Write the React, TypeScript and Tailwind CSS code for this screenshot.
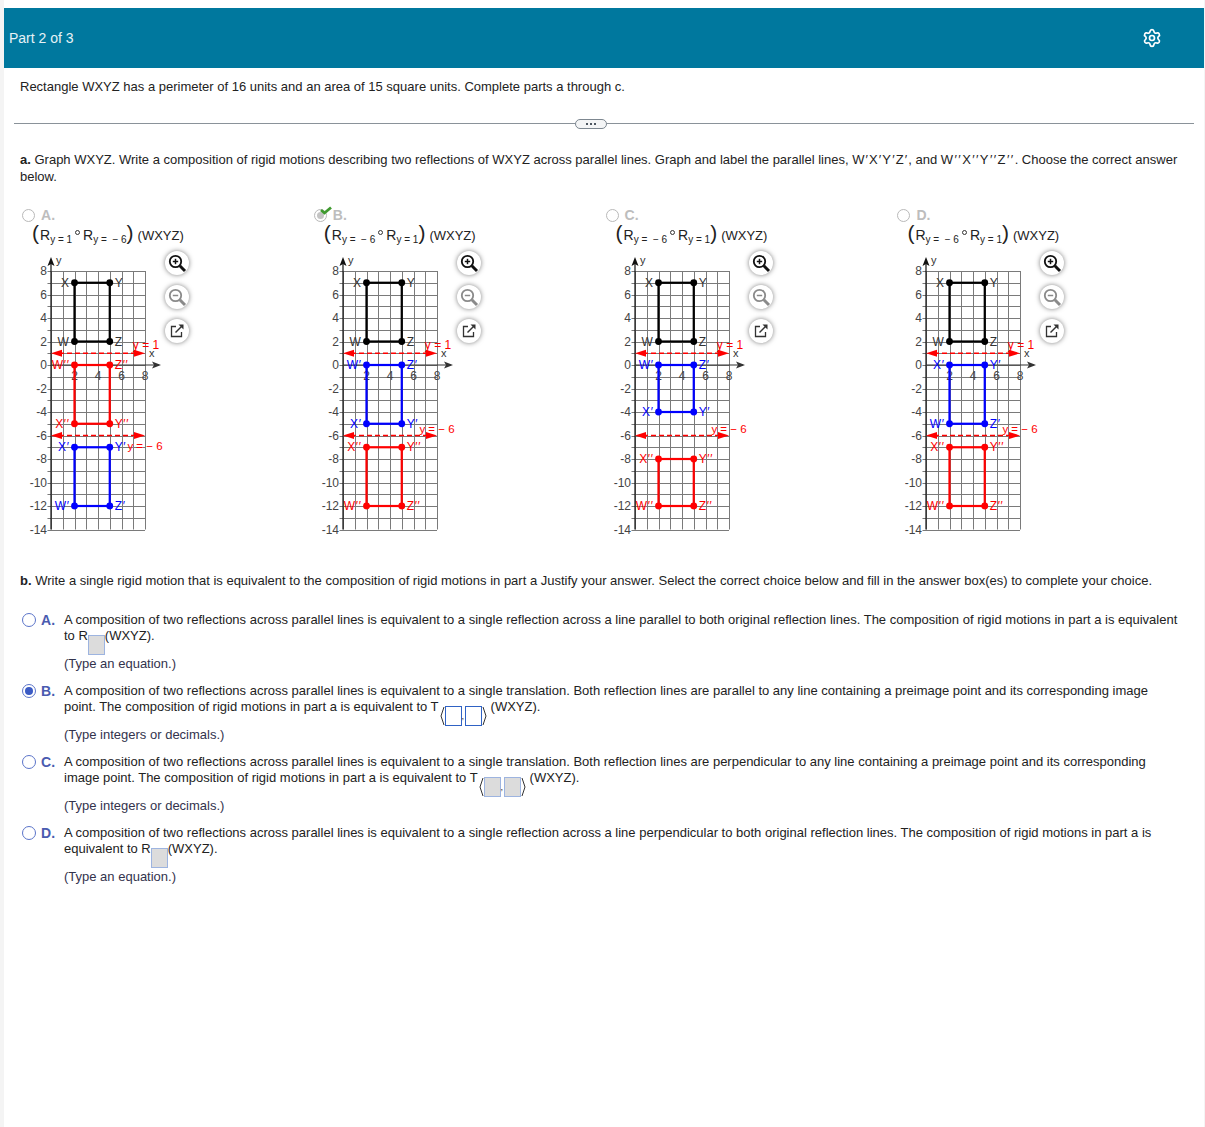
import { Settings } from "lucide-react";

const X0 = 31;
const Y0 = 115;
const UNIT = 11.75;

const px = (u: number) => X0 + u * UNIT;
const py = (u: number) => Y0 - u * UNIT;
const snap = (v: number) => Math.round(v) + 0.5;

type Shape = {
  color: string;
  top: number;
  bottom: number;
  names: [string, string, string, string];
};

type GraphProps = {
  shapes: Shape[];
  lowLabelY: number;
};

function MirrorLine({ y }: { y: number }) {
  const v = py(y);
  return (
    <g>
      <line x1={px(0) + 8} x2={px(8) - 8} y1={v} y2={v} stroke="#ff0000" strokeWidth="1.5" strokeDasharray="5 3" />
      <polygon points={`${px(0)},${v} ${px(0) + 11},${v - 3.5} ${px(0) + 11},${v + 3.5}`} fill="#ff0000" />
      <polygon points={`${px(8)},${v} ${px(8) - 11},${v - 3.5} ${px(8) - 11},${v + 3.5}`} fill="#ff0000" />
    </g>
  );
}

function Rectangle({ shape }: { shape: Shape }) {
  const { color, top, bottom, names } = shape;
  const l = px(2);
  const r = px(5);
  const t = py(top);
  const b = py(bottom);
  const points: [number, number, string, boolean][] = [
    [l, t, names[0], true],
    [r, t, names[1], false],
    [l, b, names[2], true],
    [r, b, names[3], false],
  ];
  return (
    <g>
      <rect x={l} y={t} width={r - l} height={b - t} fill="none" stroke={color} strokeWidth="2.2" />
      {points.map(([x, y, name, left]) => (
        <g key={name}>
          <circle cx={x} cy={y} r="3.4" fill={color} />
          <text
            x={left ? x - 5 : x + 5}
            y={y + 4}
            textAnchor={left ? "end" : "start"}
            fontSize="12"
            letterSpacing="0.6"
            fill={color === "#000000" ? "#333333" : color}
          >
            {name}
          </text>
        </g>
      ))}
    </g>
  );
}

function Graph({ shapes, lowLabelY }: GraphProps) {
  const xs = [0, 1, 2, 3, 4, 5, 6, 7, 8];
  const ys = Array.from({ length: 23 }, (_, i) => 8 - i);
  return (
    <svg width="145" height="290" className="overflow-visible shrink-0" style={{ fontFamily: "'Liberation Sans', Arial, sans-serif" }}>
      {xs.map((u) => (
        <line key={u} x1={snap(px(u))} x2={snap(px(u))} y1={py(8)} y2={py(-14)} stroke="#7a7a7a" />
      ))}
      {ys.map((u) => (
        <line key={u} x1={px(-0.3)} x2={px(8)} y1={snap(py(u))} y2={snap(py(u))} stroke="#7a7a7a" />
      ))}
      {ys.filter((u) => u % 2 === 0).map((u) => (
        <text key={u} x={px(0) - 4} y={py(u) + 4} textAnchor="end" fontSize="12" fill="#444444">
          {u}
        </text>
      ))}
      {[2, 4, 6, 8].map((u) => (
        <text key={u} x={px(u)} y={Y0 + 15} textAnchor="middle" fontSize="12" fill="#444444">
          {u}
        </text>
      ))}
      <line x1={px(0)} x2={px(0)} y1={py(-14)} y2={10} stroke="#111111" strokeWidth="1.2" />
      <polygon points={`${px(0)},7 ${px(0) - 3.5},16 ${px(0)},14 ${px(0) + 3.5},16`} fill="#111111" />
      <line x1={px(0)} x2={px(8) + 14} y1={Y0} y2={Y0} stroke="#333333" strokeWidth="1.2" />
      <polygon points={`${px(8) + 16},${Y0} ${px(8) + 7},${Y0 - 3.5} ${px(8) + 9},${Y0} ${px(8) + 7},${Y0 + 3.5}`} fill="#333333" />
      <text x={px(0) + 5} y="14" fontSize="11" fill="#333333">y</text>
      <text x={px(8) + 4} y={Y0 - 8} fontSize="11" fill="#333333">x</text>
      <MirrorLine y={1} />
      <MirrorLine y={-6} />
      <text x={px(8) + 1} y={py(1) - 4} textAnchor="middle" fontSize="12" fill="#ff0000">y = 1</text>
      <text x={px(8)} y={lowLabelY} textAnchor="middle" fontSize="11.5" fill="#ff0000">y = − 6</text>
      {shapes.map((shape) => (
        <Rectangle key={shape.names[0]} shape={shape} />
      ))}
    </svg>
  );
}

function Sub({ children }: { children: React.ReactNode }) {
  return <span className="inline-block translate-y-[3px] text-[10px] font-medium whitespace-pre">{children}</span>;
}

function Formula({ first, second }: { first: string; second: string }) {
  return (
    <div className="-mt-[4px] flex items-baseline h-[25px] pl-[12px] whitespace-nowrap text-[14px]">
      <span className="text-[21px] font-light leading-[25px]">(</span>
      <span className="ml-[1px]">R</span>
      <Sub>{first}</Sub>
      <span className="mx-[3px] inline-block h-[5px] w-[5px] self-center rounded-full border border-[#333333]" />
      <span>R</span>
      <Sub>{second}</Sub>
      <span className="text-[21px] font-light leading-[25px]">)</span>
      <span className="ml-[4px] text-[13px]">(WXYZ)</span>
    </div>
  );
}

function RoundButton({ children }: { children: React.ReactNode }) {
  return (
    <div className="flex h-[24px] w-[24px] items-center justify-center rounded-full bg-white shadow-[0_0_5px_rgba(0,0,0,0.5)]">
      {children}
    </div>
  );
}

function ZoomGlyph({ color, plus }: { color: string; plus?: boolean }) {
  return (
    <svg width="20" height="20" viewBox="0 0 20 20">
      <circle cx="8.5" cy="8.5" r="5.7" fill="none" stroke={color} strokeWidth="1.8" />
      <path d="M5.8 8.5h5.4" stroke={color} strokeWidth="1.5" />
      {plus && <path d="M8.5 5.8v5.4" stroke={color} strokeWidth="1.5" />}
      <path d="M12.8 12.8L18 18" stroke={color} strokeWidth="3" />
    </svg>
  );
}

function ShareGlyph() {
  return (
    <svg width="16" height="16" viewBox="0 0 16 16">
      <path d="M7 3.5H2.5v10h10V9" fill="none" stroke="#333333" strokeWidth="1.3" />
      <path d="M6.5 9.5L13 3" stroke="#333333" strokeWidth="1.5" />
      <polygon points="9.5,1.5 14.5,1.5 14.5,6.5" fill="#333333" />
    </svg>
  );
}

type ChoiceProps = GraphProps & {
  letter: string;
  first: string;
  second: string;
  correct?: boolean;
};

function Choice({ letter, first, second, shapes, lowLabelY, correct }: ChoiceProps) {
  return (
    <div className="w-[291.8px] shrink-0">
      <div className="relative flex h-[17px] items-center pl-[2px]">
        <span className="flex h-[13px] w-[13px] items-center justify-center rounded-full border border-[#b9b9b9]">
          {correct && <span className="h-[7px] w-[7px] rounded-full bg-[#c4c4c4]" />}
        </span>
        <span className="ml-[6px] text-[14px] font-bold text-[#bdbdbd]">{letter}.</span>
        {correct && (
          <svg width="12" height="9" viewBox="0 0 12 9" className="absolute left-[8px] top-[-1px]">
            <path d="M1 4 L4.5 7 L11 1.5" fill="none" stroke="#3f9a2f" strokeWidth="2.8" />
          </svg>
        )}
      </div>
      <Formula first={first} second={second} />
      <div className="mt-[5px] flex">
        <Graph shapes={shapes} lowLabelY={lowLabelY} />
        <div className="mt-[1px] flex flex-col gap-[10px]">
          <RoundButton>
            <ZoomGlyph color="#111111" plus />
          </RoundButton>
          <RoundButton>
            <ZoomGlyph color="#8a8a8a" />
          </RoundButton>
          <RoundButton>
            <ShareGlyph />
          </RoundButton>
        </div>
      </div>
    </div>
  );
}

const black: Shape = { color: "#000000", top: 7, bottom: 2, names: ["X", "Y", "W", "Z"] };
const P = "′";
const PP = "′′";

const choices: ChoiceProps[] = [
  {
    letter: "A",
    first: "y = 1",
    second: "y =  − 6",
    lowLabelY: 200,
    shapes: [
      black,
      { color: "#ff0000", top: 0, bottom: -5, names: [`W${PP}`, `Z${PP}`, `X${PP}`, `Y${PP}`] },
      { color: "#0000ff", top: -7, bottom: -12, names: [`X${P}`, `Y${P}`, `W${P}`, `Z${P}`] },
    ],
  },
  {
    letter: "B",
    first: "y =  − 6",
    second: "y = 1",
    lowLabelY: 183,
    correct: true,
    shapes: [
      black,
      { color: "#0000ff", top: 0, bottom: -5, names: [`W${P}`, `Z${P}`, `X${P}`, `Y${P}`] },
      { color: "#ff0000", top: -7, bottom: -12, names: [`X${PP}`, `Y${PP}`, `W${PP}`, `Z${PP}`] },
    ],
  },
  {
    letter: "C",
    first: "y =  − 6",
    second: "y = 1",
    lowLabelY: 183,
    shapes: [
      black,
      { color: "#0000ff", top: 0, bottom: -4, names: [`W${P}`, `Z${P}`, `X${P}`, `Y${P}`] },
      { color: "#ff0000", top: -8, bottom: -12, names: [`X${PP}`, `Y${PP}`, `W${PP}`, `Z${PP}`] },
    ],
  },
  {
    letter: "D",
    first: "y =  − 6",
    second: "y = 1",
    lowLabelY: 183,
    shapes: [
      black,
      { color: "#0000ff", top: 0, bottom: -5, names: [`X${P}`, `Y${P}`, `W${P}`, `Z${P}`] },
      { color: "#ff0000", top: -7, bottom: -12, names: [`X${PP}`, `Y${PP}`, `W${PP}`, `Z${PP}`] },
    ],
  },
];

function AnswerBox({ active }: { active?: boolean }) {
  return (
    <span
      className={
        active
          ? "block h-[20px] w-[17px] border-[1.5px] border-[#2f62c4] bg-white"
          : "block h-[20px] w-[17px] border border-[#9db4e0] bg-[#dcdcdc]"
      }
    />
  );
}

function PairBox({ active }: { active?: boolean }) {
  return (
    <span className="mt-[7px] ml-[1px] mr-[4px] flex h-[20px] shrink-0 items-center">
      <svg width="5" height="20" viewBox="0 0 5 20">
        <path d="M4 1 L1 10 L4 19" fill="none" stroke="#333333" strokeWidth="1" />
      </svg>
      <AnswerBox active={active} />
      <span className="w-[3px] text-[9px] leading-[20px]">,</span>
      <AnswerBox active={active} />
      <svg width="5" height="20" viewBox="0 0 5 20">
        <path d="M1 1 L4 10 L1 19" fill="none" stroke="#333333" strokeWidth="1" />
      </svg>
    </span>
  );
}

function SingleBox() {
  return (
    <span className="mt-[7px] shrink-0">
      <AnswerBox />
    </span>
  );
}

type OptionProps = {
  letter: string;
  selected?: boolean;
  first: string;
  second: React.ReactNode;
  hint: string;
};

function Option({ letter, selected, first, second, hint }: OptionProps) {
  return (
    <div className="flex">
      <span className="ml-[2px] mt-[1px] flex h-[14px] w-[14px] shrink-0 items-center justify-center rounded-full border-[1.5px] border-[#5b74c9] bg-white">
        {selected && <span className="h-[8px] w-[8px] rounded-full bg-[#3b5bc4]" />}
      </span>
      <span className="ml-[5px] w-[23px] shrink-0 text-[14px] font-bold text-[#4a5bb0]">{letter}.</span>
      <div className="whitespace-nowrap">
        <div className="h-[16px] leading-[16px]">{first}</div>
        <div className="flex h-[16px] leading-[16px]">{second}</div>
        <div className="mt-[12px] h-[16px] leading-[16px] text-[#33334d]">{hint}</div>
      </div>
    </div>
  );
}

export default function App() {
  return (
    <div className="min-h-[1127px] bg-[#f4f4f4] pl-[4px] pr-[1px] text-[13px] leading-[17px] text-[#222222] font-['Liberation_Sans',Arial,sans-serif]">
      <div className="h-[1127px] bg-white pt-[8px]">
        <div className="flex h-[60px] items-center justify-between bg-[#00789e] pl-[5px] pr-[42px] text-[14px] text-[#e6f2f6]">
          <span>Part 2 of 3</span>
          <Settings size={20} color="#ffffff" strokeWidth={2} />
        </div>

        <p className="mt-[10px] pl-[16px]">
          Rectangle WXYZ has a perimeter of 16 units and an area of 15 square units. Complete parts a through c.
        </p>

        <div className="mt-[23px] ml-[10px] mr-[10px] flex h-[11px] items-center">
          <div className="h-px w-[561px] bg-[#8a9299]" />
          <div className="flex h-[10px] w-[32px] items-center justify-center gap-[2px] rounded-full border border-[#7d8790] bg-[#f4f5f6]">
            <span className="h-[2px] w-[2px] bg-[#4d5660]" />
            <span className="h-[2px] w-[2px] bg-[#4d5660]" />
            <span className="h-[2px] w-[2px] bg-[#4d5660]" />
          </div>
          <div className="h-px flex-1 bg-[#8a9299]" />
        </div>

        <p className="mt-[22px] pl-[16px] pr-[20px]">
          <b>a.</b> Graph WXYZ. Write a composition of rigid motions describing two reflections of WXYZ across parallel lines. Graph and label the parallel lines, <span className="tracking-[1.1px]">W′X′Y′Z′</span>, and <span className="tracking-[1.4px]">W′′X′′Y′′Z′′</span>. Choose the correct answer below.
        </p>

        <div className="mt-[22px] flex pl-[16px]">
          {choices.map((c) => (
            <Choice key={c.letter} {...c} />
          ))}
        </div>

        <p className="mt-[32px] pl-[16px]">
          <b>b.</b> Write a single rigid motion that is equivalent to the composition of rigid motions in part a Justify your answer. Select the correct choice below and fill in the answer box(es) to complete your choice.
        </p>

        <div className="mt-[23px] flex flex-col gap-[11px] pl-[16px]">
          <Option
            letter="A"
            first="A composition of two reflections across parallel lines is equivalent to a single reflection across a line parallel to both original reflection lines. The composition of rigid motions in part a is equivalent"
            second={
              <>
                <span>to R</span>
                <SingleBox />
                <span>(WXYZ).</span>
              </>
            }
            hint="(Type an equation.)"
          />
          <Option
            letter="B"
            selected
            first="A composition of two reflections across parallel lines is equivalent to a single translation. Both reflection lines are parallel to any line containing a preimage point and its corresponding image"
            second={
              <>
                <span>point. The composition of rigid motions in part a is equivalent to T</span>
                <PairBox active />
                <span>(WXYZ).</span>
              </>
            }
            hint="(Type integers or decimals.)"
          />
          <Option
            letter="C"
            first="A composition of two reflections across parallel lines is equivalent to a single translation. Both reflection lines are perpendicular to any line containing a preimage point and its corresponding"
            second={
              <>
                <span>image point. The composition of rigid motions in part a is equivalent to T</span>
                <PairBox />
                <span>(WXYZ).</span>
              </>
            }
            hint="(Type integers or decimals.)"
          />
          <Option
            letter="D"
            first="A composition of two reflections across parallel lines is equivalent to a single reflection across a line perpendicular to both original reflection lines. The composition of rigid motions in part a is"
            second={
              <>
                <span>equivalent to R</span>
                <SingleBox />
                <span>(WXYZ).</span>
              </>
            }
            hint="(Type an equation.)"
          />
        </div>
      </div>
    </div>
  );
}
